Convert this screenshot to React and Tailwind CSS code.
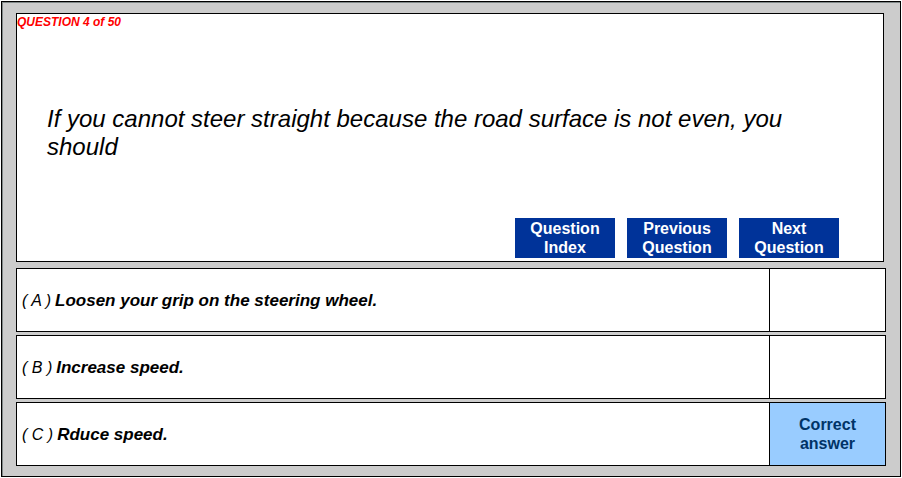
const actions = [
  ['Question', 'Index'],
  ['Previous', 'Question'],
  ['Next', 'Question'],
];

const answers = [
  { letter: 'A', text: 'Loosen your grip on the steering wheel.' },
  { letter: 'B', text: 'Increase speed.' },
  { letter: 'C', text: 'Rduce speed.', correct: true },
];

function ActionButton({ lines }) {
  return (
    <button
      type="button"
      className="h-10 w-[100px] pb-px bg-[#003399] text-center text-[16px] leading-[19px] font-bold text-white"
    >
      {lines[0]}
      <br />
      {lines[1]}
    </button>
  );
}

function AnswerRow({ letter, text, correct }) {
  return (
    <li className="flex h-16 border border-black bg-white">
      <div className="flex min-w-0 flex-1 items-center gap-1 pl-[5px] italic">
        <span className="pt-px text-[16px] leading-5">( {letter} )</span>
        <span className="pt-px text-[17px] leading-5 font-bold">{text}</span>
      </div>
      <div
        className={
          correct
            ? 'flex w-[116px] items-center justify-center border-l border-black bg-[#99ccff] text-center text-[16px] leading-[19px] font-bold text-[#003366]'
            : 'w-[116px] border-l border-black'
        }
      >
        {correct && (
          <span>
            Correct
            <br />
            answer
          </span>
        )}
      </div>
    </li>
  );
}

export default function App() {
  return (
    <div className="min-h-screen bg-white p-px font-['Liberation_Sans',Arial,sans-serif] text-black">
      <main className="border border-black bg-[#cccccc] pt-[11px] pr-[14px] pb-[10px] pl-[14px] shadow-[inset_1px_1px_0_#808888]">
        <section className="mr-[2px] flex h-[249px] flex-col border border-black bg-white">
          <h1 className="text-[12px] leading-4 font-bold text-[#ff0000] italic">QUESTION 4 of 50</h1>
          <p className="mt-[75px] pr-20 pl-[30px] text-[24px] leading-7 italic">
            If you cannot steer straight because the road surface is not even, you should
          </p>
          <nav className="mt-auto mr-11 mb-[3px] flex justify-end gap-3">
            {actions.map((lines) => (
              <ActionButton key={lines.join(' ')} lines={lines} />
            ))}
          </nav>
        </section>
        <ol className="mt-[6px] flex flex-col gap-[3px]">
          {answers.map((answer) => (
            <AnswerRow key={answer.letter} {...answer} />
          ))}
        </ol>
      </main>
    </div>
  );
}
